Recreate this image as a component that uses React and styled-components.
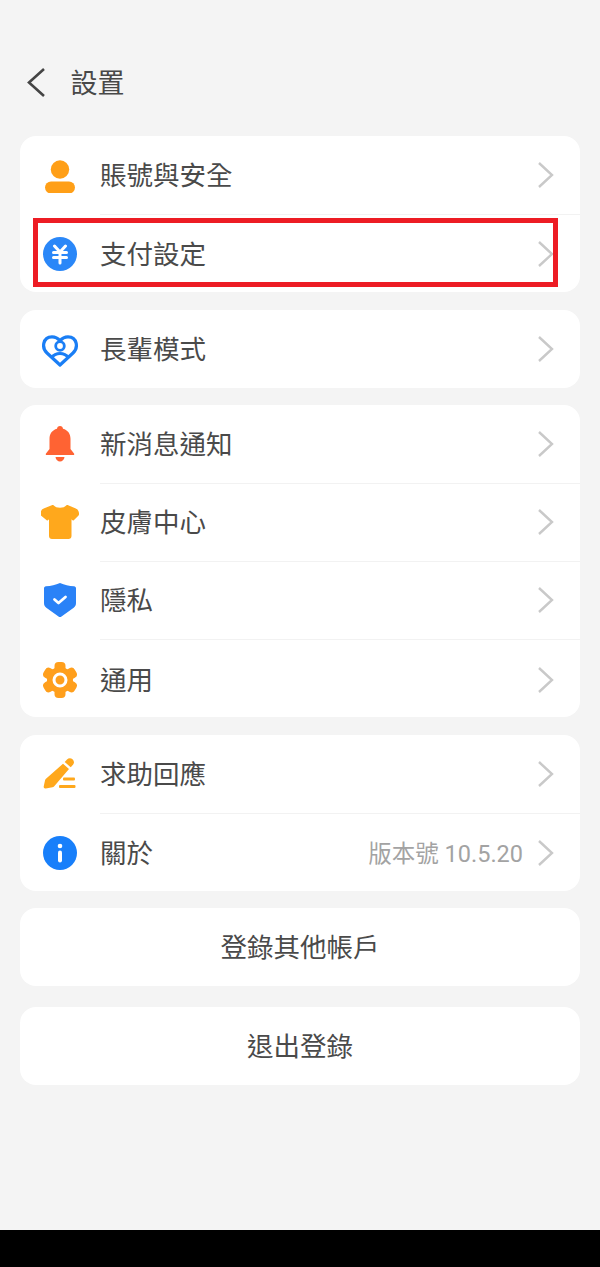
import React from "react";
import styled, { createGlobalStyle } from "styled-components";

const GlobalStyle = createGlobalStyle`
  html, body { margin: 0; padding: 0; background: #f4f4f4; }
  body { font-family: "Noto Sans CJK TC", "Noto Sans", sans-serif; }
`;

const Page = styled.div`
  width: 600px;
  height: 1267px;
  background: #f4f4f4;
  display: flex;
  flex-direction: column;
  overflow: hidden;
`;

const Header = styled.header`
  height: 136px;
  box-sizing: border-box;
  padding: 65px 0 0 26px;
  display: flex;
  align-items: flex-start;
  flex-shrink: 0;
`;

const BackIcon = styled.svg`
  width: 20px;
  height: 34px;
  display: block;
`;

const Title = styled.h1`
  margin: 0 0 0 24.5px;
  font-size: 27px;
  line-height: 34px;
  font-weight: 400;
  color: #484848;
`;

const List = styled.main`
  flex: 1;
  padding: 0 20px;
  display: flex;
  flex-direction: column;
  gap: 17.5px;
`;

const Card = styled.section`
  background: #fff;
  border-radius: 16px;
  flex-shrink: 0;
`;

const Row = styled.div`
  position: relative;
  height: 78px;
  box-sizing: border-box;
  padding-top: ${(p) => p.$shift || 0}px;
  display: flex;
  align-items: center;
`;

const IconSlot = styled.div`
  width: 80px;
  flex-shrink: 0;
  display: flex;
  justify-content: center;
  svg { display: block; }
`;

const Body = styled.div`
  flex: 1;
  align-self: stretch;
  display: flex;
  align-items: center;
  box-shadow: ${(p) => (p.$divider ? "0 1px 0 #f2f2f2" : "none")};
  padding-right: 26px;
`;

const Label = styled.span`
  flex: 1;
  font-size: 26.5px;
  color: #4a4a4a;
  line-height: 34px;
  padding-bottom: 2px;
`;

const Meta = styled.span`
  font-family: Roboto, "Noto Sans CJK TC", sans-serif;
  font-size: 23.5px;
  color: #a3a3a3;
  margin-right: 14px;
  padding-bottom: 1px;
`;

const Chevron = styled.svg`
  width: 17px;
  height: 28px;
  display: block;
`;

const Highlight = styled.div`
  position: absolute;
  left: 13px;
  top: 3.5px;
  width: 525px;
  height: 69px;
  box-sizing: border-box;
  border: 5.5px solid #ed1c24;
  pointer-events: none;
`;

const ActionCard = styled(Card)`
  height: 78px;
  box-sizing: border-box;
  padding-bottom: 4px;
  display: flex;
  align-items: center;
  justify-content: center;
  font-size: 26.5px;
  color: #4a4a4a;
  margin-top: ${(p) => p.$offset || 0}px;
`;

const NavBar = styled.div`
  height: 37px;
  background: #000;
  flex-shrink: 0;
`;

const Arrow = () => (
  <Chevron viewBox="0 0 17 28">
    <path d="M2 2l13 12L2 26" fill="none" stroke="#c9c9c9" strokeWidth="2.4" />
  </Chevron>
);

const PersonIcon = () => (
  <svg width="32" height="36" viewBox="0 -3 32 36">
    <circle cx="16" cy="9.5" r="9.2" fill="#ff9f17" />
    <rect x="1" y="21.5" width="30" height="12" rx="6" fill="#ff9f17" />
  </svg>
);

const YenIcon = () => (
  <svg width="34" height="34" viewBox="0 0 34 34">
    <circle cx="17" cy="17" r="17" fill="#2a87f8" />
    <path
      d="M11.5 9l5.5 6 5.500-6M10.500 15.500h13M10.500 20.500h13M17 15.500V26"
      fill="none"
      stroke="#fff"
      strokeWidth="3"
      strokeLinecap="round"
    />
  </svg>
);

const HeartIcon = () => (
  <svg width="36" height="36" viewBox="0 -4 36 36">
    <path
      d="M18 30L5 18C-.5 13 .5 2 10 1.800c3.500 0 6 1.500 8 4 2-2.500 4.500-4 8-4 9.500.2 10.500 11.200 5 16.200z"
      fill="none"
      stroke="#1a7ef5"
      strokeWidth="3.200"
      strokeLinejoin="round"
    />
    <circle cx="18" cy="11" r="4.300" fill="none" stroke="#1a7ef5" strokeWidth="2.800" />
    <path d="M9 23c2.500-3 5.500-4.500 9-4.500s6.500 1.500 9 4.500" fill="none" stroke="#1a7ef5" strokeWidth="3" />
  </svg>
);

const BellIcon = () => (
  <svg width="30" height="36" viewBox="0 0 30 36">
    <path
      d="M15 0c1.700 0 3 1.200 3 2.700 4.800 1.300 7.500 5 7.500 10V23l3.500 4.500c.6.800.2 1.500-.7 1.500H1.700c-.9 0-1.300-.7-.7-1.500L4.500 23V12.700c0-5 2.700-8.700 7.500-10C12 1.200 13.300 0 15 0z"
      fill="#ff6333"
    />
    <path d="M10.500 31h9c-.4 2.800-2.200 4.500-4.500 4.500s-4.100-1.700-4.500-4.500z" fill="#ff6333" />
  </svg>
);

const ShirtIcon = () => (
  <svg width="38" height="34" viewBox="0 0 38 34">
    <path
      d="M12.500.3c1.500 1.700 3.700 2.500 6.500 2.500s5-.8 6.500-2.500c.3-.3.700-.4 1.100-.2l8.200 3.300c1.300.5 2.300 1.500 2.700 2.800l.5 1.700c.3 1 0 2-.7 2.800l-4.500 4.500c-.5.500-1.200.4-1.600-.1l-.7-.9V31c0 1.700-1.300 3-3 3H11c-1.700 0-3-1.300-3-3V14.200l-.7.900c-.4.500-1.100.6-1.600.1L.2 10.700c-.7-.8-1-1.800-.7-2.800L0 6.200c.4-1.300 1.400-2.300 2.700-2.800L11.400.1c.4-.2.800-.1 1.100.2z"
      fill="#ffa81c"
    />
  </svg>
);

const ShieldIcon = () => (
  <svg width="32" height="36" viewBox="0 -1 32 36">
    <path
      d="M16 0c4.500 2 9 3 14 3.300 1.200.1 2 1 2 2.200V20c0 2-.8 3.500-2.300 4.800L17.500 33.500c-.9.700-2.100.7-3 0L2.300 24.800C.8 23.500 0 22 0 20V5.500C0 4.300.8 3.400 2 3.300 7 3 11.500 2 16 0z"
      fill="#2a82f7"
    />
    <path d="M10.500 16.500l4 3.500 7-6" fill="none" stroke="#fff" strokeWidth="2.800" strokeLinecap="round" strokeLinejoin="round" />
  </svg>
);

const GearIcon = () => (
  <svg width="36" height="36" viewBox="0 0 36 36">
    <circle cx="18" cy="18" r="13" fill="#ff9f1c" />
    <rect x="12.500" y="0" width="11" height="36" rx="4" fill="#ff9f1c" />
    <rect x="12.500" y="0" width="11" height="36" rx="4" fill="#ff9f1c" transform="rotate(60 18 18)" />
    <rect x="12.500" y="0" width="11" height="36" rx="4" fill="#ff9f1c" transform="rotate(120 18 18)" />
    <circle cx="18" cy="18" r="6" fill="none" stroke="#fff" strokeWidth="3" />
  </svg>
);

const PenIcon = () => (
  <svg width="34" height="34" viewBox="0 0 34 34">
    <path d="M24 2.500c1.500-1.600 3.800-1.700 5.500-.3 1.700 1.500 1.900 3.800.5 5.500l-2.300 2.600-6-5.200z" fill="#ffa81c" />
    <path d="M20 6.800l6 5.200L11 29.500c-.4.500-.9.700-1.500.8l-6.800 1.100c-1.300.2-2.200-.8-2-2l1.300-6c.1-.5.300-1 .7-1.400z" fill="#ffa81c" />
    <rect x="20" y="20.500" width="12" height="3" rx="1" fill="#ffa81c" />
    <rect x="16" y="28" width="16.500" height="3" rx="1" fill="#ffa81c" />
  </svg>
);

const InfoIcon = () => (
  <svg width="34" height="34" viewBox="0 0 34 34">
    <circle cx="17" cy="17" r="17" fill="#187ffa" />
    <circle cx="17" cy="10" r="2.300" fill="#fff" />
    <rect x="15" y="14.500" width="4" height="12" rx="2" fill="#fff" />
  </svg>
);

const Item = ({ icon, label, meta, divider, shift, children }) => (
  <Row $shift={shift}>
    <IconSlot>{icon}</IconSlot>
    <Body $divider={divider}>
      <Label>{label}</Label>
      {meta && <Meta>{meta}</Meta>}
      <Arrow />
    </Body>
    {children}
  </Row>
);

export default function App() {
  return (
    <Page>
      <GlobalStyle />
      <Header>
        <BackIcon viewBox="0 0 20 34">
          <path d="M18 4L3 17.500 18 31" fill="none" stroke="#444" strokeWidth="2.600" />
        </BackIcon>
        <Title>設置</Title>
      </Header>
      <List>
        <Card>
          <Item icon={<PersonIcon />} label="賬號與安全" divider />
          <Item icon={<YenIcon />} label="支付設定" shift={2}>
            <Highlight />
          </Item>
        </Card>
        <Card>
          <Item icon={<HeartIcon />} label="長輩模式" />
        </Card>
        <Card>
          <Item icon={<BellIcon />} label="新消息通知" divider />
          <Item icon={<ShirtIcon />} label="皮膚中心" divider />
          <Item icon={<ShieldIcon />} label="隱私" divider />
          <Item icon={<GearIcon />} label="通用" shift={3} />
        </Card>
        <Card>
          <Item icon={<PenIcon />} label="求助回應" divider />
          <Item icon={<InfoIcon />} label="關於" meta="版本號 10.5.20" shift={2} />
        </Card>
        <ActionCard>登錄其他帳戶</ActionCard>
        <ActionCard $offset={3.5}>退出登錄</ActionCard>
      </List>
      <NavBar />
    </Page>
  );
}
